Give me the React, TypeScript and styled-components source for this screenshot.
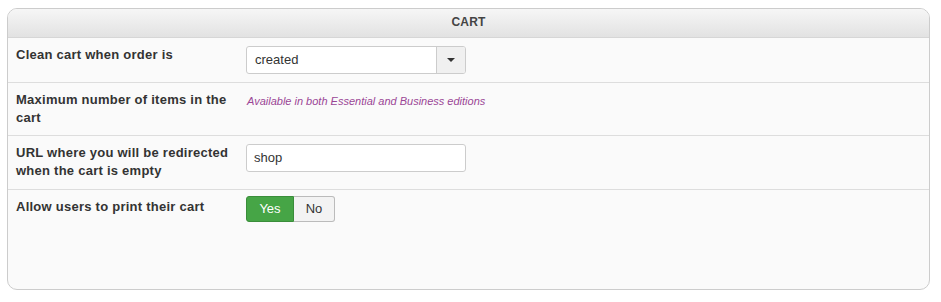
import { createGlobalStyle, styled } from 'styled-components';

const GlobalStyle = createGlobalStyle`
  html, body {
    margin: 0;
    padding: 0;
    background: #fff;
  }
  body {
    padding: 8px 11px 0 7px;
    font-family: "Liberation Sans", Arial, Helvetica, sans-serif;
    font-size: 13px;
    color: #333;
  }
`;

const Panel = styled.div`
  display: flex;
  flex-direction: column;
  height: 282px;
  box-sizing: border-box;
  border: 1px solid #ccc;
  border-radius: 10px;
  background: #fafafa;
  overflow: hidden;
`;

const Header = styled.div`
  height: 28px;
  line-height: 27px;
  text-align: center;
  font-weight: bold;
  font-size: 12px;
  letter-spacing: 0.2px;
  color: #444;
  background: linear-gradient(#f6f6f6, #e2e2e2);
  border-bottom: 1px solid #d6d6d6;
`;

const Row = styled.div<{ $last?: boolean; $tall?: boolean }>`
  display: grid;
  grid-template-columns: 230px 1fr;
  align-items: start;
  padding: 8px 8px ${(p) => (p.$tall ? '9px' : '8px')};
  border-bottom: ${(p) => (p.$last ? 'none' : '1px solid #ddd')};
  flex: ${(p) => (p.$last ? '1' : 'none')};
`;

const Label = styled.div`
  font-weight: bold;
  line-height: 18px;
  letter-spacing: 0.25px;
  color: #333;
  max-width: 224px;
`;

const Note = styled.div`
  font-style: italic;
  font-size: 11px;
  color: #9a4696;
  line-height: 18px;
  padding-top: 1px;
  padding-left: 1px;
`;

const Select = styled.div`
  display: flex;
  width: 220px;
  height: 28px;
  box-sizing: border-box;
  border: 1px solid #ccc;
  border-radius: 3px;
  background: #fff;
  overflow: hidden;
`;

const SelectValue = styled.div`
  flex: 1;
  padding-left: 8px;
  line-height: 25px;
  color: #333;
`;

const SelectArrow = styled.div`
  width: 28px;
  border-left: 1px solid #ccc;
  background: #f0f0f0;
  display: flex;
  align-items: center;
  justify-content: center;
  &::after {
    content: '';
    border-left: 4px solid transparent;
    border-right: 4px solid transparent;
    border-top: 4px solid #333;
  }
`;

const TextInput = styled.div`
  width: 220px;
  height: 28px;
  box-sizing: border-box;
  border: 1px solid #ccc;
  border-radius: 3px;
  background: #fff;
  padding-left: 7px;
  line-height: 25px;
  color: #333;
`;

const BtnGroup = styled.div`
  display: flex;
  margin-top: -2px;
`;

const ToggleBtn = styled.div<{ $active?: boolean; $first?: boolean }>`
  height: 26px;
  box-sizing: border-box;
  line-height: 24px;
  width: ${(p) => (p.$first ? '48px' : '41px')};
  text-align: center;
  border: 1px solid ${(p) => (p.$active ? '#3a8d3a' : '#bbb')};
  border-left-width: ${(p) => (p.$first ? '1px' : '0')};
  border-radius: ${(p) => (p.$first ? '3px 0 0 3px' : '0 3px 3px 0')};
  background: ${(p) => (p.$active ? '#46a546' : '#f3f3f3')};
  color: ${(p) => (p.$active ? '#fff' : '#333')};
`;

export default function App() {
  return (
    <>
      <GlobalStyle />
      <Panel>
        <Header>CART</Header>
        <Row>
          <Label>Clean cart when order is</Label>
          <Select>
            <SelectValue>created</SelectValue>
            <SelectArrow />
          </Select>
        </Row>
        <Row>
          <Label>Maximum number of items in the cart</Label>
          <Note>Available in both Essential and Business editions</Note>
        </Row>
        <Row $tall>
          <Label>URL where you will be redirected when the cart is empty</Label>
          <TextInput>shop</TextInput>
        </Row>
        <Row $last>
          <Label>Allow users to print their cart</Label>
          <BtnGroup>
            <ToggleBtn $active $first>
              Yes
            </ToggleBtn>
            <ToggleBtn>No</ToggleBtn>
          </BtnGroup>
        </Row>
      </Panel>
    </>
  );
}
